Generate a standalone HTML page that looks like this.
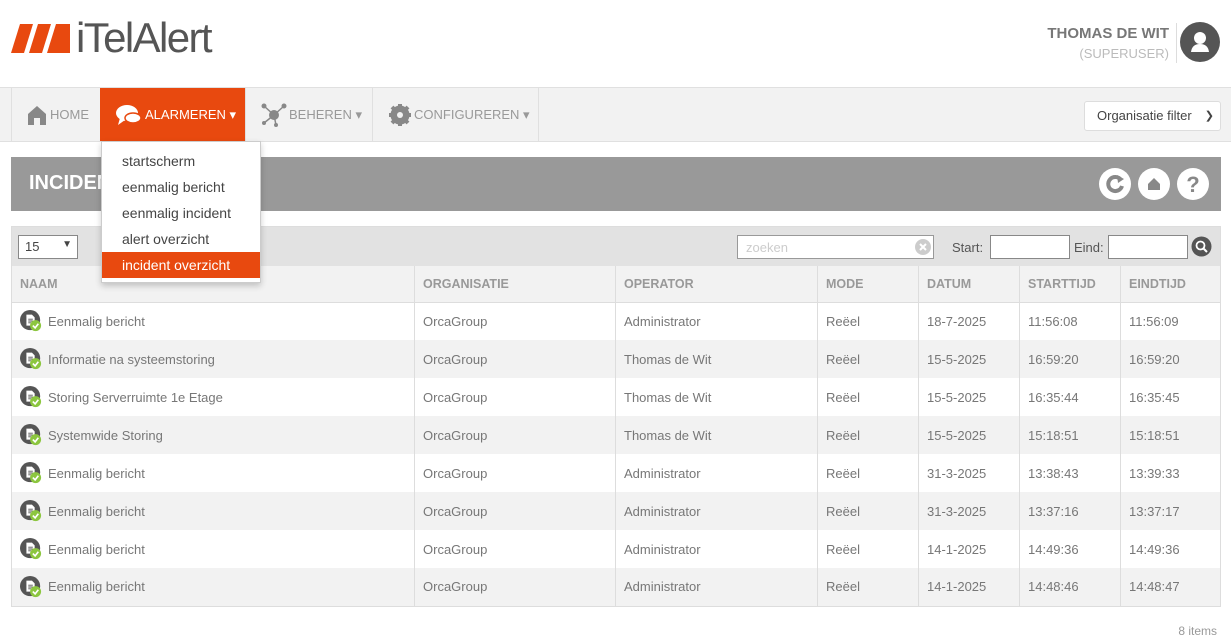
<!DOCTYPE html>
<html><head><meta charset="utf-8"><style>
*{box-sizing:border-box;margin:0;padding:0}
body{width:1231px;height:641px;background:#fff;font-family:"Liberation Sans",sans-serif;color:#666;position:relative;overflow:hidden;font-size:13px}
.abs{position:absolute}
.nav{left:0;top:87px;width:1231px;height:55px;background:#f2f2f2;border-top:1px solid #e0e0e0;border-bottom:1px solid #e0e0e0}
.ni{position:absolute;top:0;height:53px;border-left:1px solid #e0e0e0;display:flex;align-items:center;font-size:13px;color:#999}
table{border-collapse:collapse;position:absolute;left:11px;top:266px;width:1210px}
td,th{height:38px;border-right:1px solid #ddd;padding-left:8px;text-align:left;font-size:13px;color:#777;font-weight:normal}
th{height:36px;font-weight:bold;color:#999;background:#f2f2f2;border-bottom:1px solid #ddd;font-size:12.5px}
tr:nth-child(odd) td{background:#f2f2f2}
table{border-left:1px solid #ddd;border-bottom:1px solid #ddd}
.nm{display:flex;align-items:center}
.ic{display:inline-block;margin-right:6px;width:22px;height:22px}
.dd div{height:26px;line-height:26px;padding-left:20px;font-size:14px;color:#444}
</style></head><body>
<svg class="abs" style="left:11px;top:24px" width="62" height="30"><polygon points="9,0 22,0 13,29 0,29" fill="#e8490f"/><polygon points="27,0 40,0 31,29 18,29" fill="#e8490f"/><polygon points="45,0 59,0 59,29 36,29" fill="#e8490f"/></svg>
<div class="abs" style="left:76px;top:14px;font-size:42px;color:#555;letter-spacing:-1.6px">iTelAlert</div>
<div class="abs" style="right:62px;top:25px;font-size:15px;font-weight:bold;color:#777;text-align:right">THOMAS DE WIT</div>
<div class="abs" style="right:62px;top:46px;font-size:13px;color:#bbb;text-align:right">(SUPERUSER)</div>
<div class="abs" style="left:1176px;top:23px;width:1px;height:40px;background:#ddd"></div>
<svg class="abs" style="left:1180px;top:22px" width="40" height="40"><circle cx="20" cy="20" r="20" fill="#555"/><circle cx="20" cy="16" r="6" fill="#fff"/><path d="M11 30 Q12 22 20 22 Q28 22 29 30Z" fill="#fff"/></svg>
<div class="abs nav"></div>
<div class="ni" style="left:11px;top:88px;width:90px;padding-left:15px"><svg width="20" height="20"><path d="M10 1 L19 9 V20 H13 V13 H7 V20 H1 V9Z" fill="#888"/></svg><span style="margin-left:3px">HOME</span></div>
<div class="ni" style="left:100px;top:88px;width:145px;background:#e8490f;color:#fff;padding-left:15px;border:none"><svg width="28" height="22"><ellipse cx="12" cy="9" rx="11" ry="8" fill="#fff"/><path d="M5 14 L3 21 L10 16Z" fill="#fff"/><ellipse cx="18" cy="14" rx="8" ry="5" fill="#fff" stroke="#e8490f" stroke-width="1.5"/></svg><span style="margin-left:2px">ALARMEREN ▾</span></div>
<div class="ni" style="left:245px;top:88px;width:127px;padding-left:15px"><svg width="26" height="24"><g fill="#888"><circle cx="13" cy="12" r="5"/><circle cx="3" cy="3" r="2.5"/><circle cx="23" cy="3" r="2.5"/><circle cx="3" cy="20" r="2"/><circle cx="15" cy="22" r="2"/></g><path d="M3 3L13 12L23 3M3 20L13 12L15 22" stroke="#888" stroke-width="1.5" fill="none"/></svg><span style="margin-left:2px">BEHEREN ▾</span></div>
<div class="ni" style="left:372px;top:88px;width:167px;padding-left:16px;border-right:1px solid #e0e0e0"><svg width="22" height="22"><circle cx="11" cy="11" r="7" fill="none" stroke="#888" stroke-width="5"/><g stroke="#888" stroke-width="4"><path d="M11 0V22M0 11H22M3 3L19 19M19 3L3 19"/></g><circle cx="11" cy="11" r="3" fill="#f2f2f2"/></svg><span style="margin-left:3px">CONFIGUREREN ▾</span></div>
<div class="abs" style="left:1084px;top:101px;width:137px;height:30px;background:#fff;border:1px solid #ddd;border-radius:3px;font-size:13px;color:#444;line-height:28px;padding-left:12px">Organisatie filter <span style="position:absolute;right:6px;font-size:11px">❯</span></div>
<div class="abs" style="left:11px;top:157px;width:1210px;height:54px;background:#999"></div>
<div class="abs" style="left:29px;top:172px;font-size:20px;font-weight:bold;color:#fff">INCIDENTEN</div>
<svg class="abs" style="left:1098px;top:168px" width="116" height="34"><g fill="#fff"><circle cx="17" cy="16" r="16"/><circle cx="56" cy="16" r="16"/><circle cx="95" cy="16" r="16"/></g><path d="M23 12 A7 7 0 1 0 24 18" stroke="#888" stroke-width="4" fill="none"/><path d="M19 7L26 11L20 15Z" fill="#888"/><path d="M50 16L56 10L62 16V22H50Z" fill="#888"/><text x="95" y="24" text-anchor="middle" font-size="22" font-weight="bold" fill="#888" font-family="Liberation Sans">?</text></svg>
<div class="abs" style="left:11px;top:226px;width:1210px;height:41px;background:#e2e2e2;border:1px solid #ddd"></div>
<div class="abs" style="left:18px;top:235px;width:60px;height:24px;background:#fff;border:1px solid #888;font-size:13px;color:#444;padding:3px 6px">15<span style="position:absolute;right:5px;font-size:10px">▼</span></div>
<div class="abs" style="left:737px;top:235px;width:197px;height:24px;background:#fff;border:1px solid #999;color:#ccc;padding:4px 8px">zoeken<svg style="position:absolute;right:1px;top:2px" width="18" height="18"><circle cx="9" cy="9" r="8" fill="#ccc"/><path d="M6 6L12 12M12 6L6 12" stroke="#fff" stroke-width="2"/></svg></div>
<div class="abs" style="left:952px;top:240px;color:#555">Start:</div>
<div class="abs" style="left:990px;top:235px;width:80px;height:24px;background:#fff;border:1px solid #888"></div>
<div class="abs" style="left:1074px;top:240px;color:#555">Eind:</div>
<div class="abs" style="left:1108px;top:235px;width:80px;height:24px;background:#fff;border:1px solid #888"></div>
<svg class="abs" style="left:1191px;top:236px" width="21" height="21"><circle cx="10.5" cy="10.5" r="10" fill="#555"/><circle cx="9.5" cy="9.5" r="4" stroke="#fff" stroke-width="1.8" fill="none"/><path d="M12.5 12.5L16 16" stroke="#fff" stroke-width="2"/></svg>
<table>
<tr><th style="width:403px">NAAM</th><th style="width:201px">ORGANISATIE</th><th style="width:202px">OPERATOR</th><th style="width:101px">MODE</th><th style="width:101px">DATUM</th><th style="width:101px">STARTTIJD</th><th>EINDTIJD</th></tr>
<tr><td><div class="nm"><svg class="ic" viewBox="0 0 24 24"><circle cx="11" cy="11" r="11" fill="#555"/><path d="M7 5H13L16 8V17H7Z" fill="#fff"/><path d="M9 10H14M9 12H14M9 14H12" stroke="#555"/><circle cx="17" cy="17" r="6" fill="#8cc63f"/><path d="M14 17L16.5 19.5L20 15" stroke="#fff" stroke-width="1.8" fill="none"/></svg>Eenmalig bericht</div></td><td>OrcaGroup</td><td>Administrator</td><td>Reëel</td><td>18-7-2025</td><td>11:56:08</td><td>11:56:09</td></tr>
<tr><td><div class="nm"><svg class="ic" viewBox="0 0 24 24"><circle cx="11" cy="11" r="11" fill="#555"/><path d="M7 5H13L16 8V17H7Z" fill="#fff"/><path d="M9 10H14M9 12H14M9 14H12" stroke="#555"/><circle cx="17" cy="17" r="6" fill="#8cc63f"/><path d="M14 17L16.5 19.5L20 15" stroke="#fff" stroke-width="1.8" fill="none"/></svg>Informatie na systeemstoring</div></td><td>OrcaGroup</td><td>Thomas de Wit</td><td>Reëel</td><td>15-5-2025</td><td>16:59:20</td><td>16:59:20</td></tr>
<tr><td><div class="nm"><svg class="ic" viewBox="0 0 24 24"><circle cx="11" cy="11" r="11" fill="#555"/><path d="M7 5H13L16 8V17H7Z" fill="#fff"/><path d="M9 10H14M9 12H14M9 14H12" stroke="#555"/><circle cx="17" cy="17" r="6" fill="#8cc63f"/><path d="M14 17L16.5 19.5L20 15" stroke="#fff" stroke-width="1.8" fill="none"/></svg>Storing Serverruimte 1e Etage</div></td><td>OrcaGroup</td><td>Thomas de Wit</td><td>Reëel</td><td>15-5-2025</td><td>16:35:44</td><td>16:35:45</td></tr>
<tr><td><div class="nm"><svg class="ic" viewBox="0 0 24 24"><circle cx="11" cy="11" r="11" fill="#555"/><path d="M7 5H13L16 8V17H7Z" fill="#fff"/><path d="M9 10H14M9 12H14M9 14H12" stroke="#555"/><circle cx="17" cy="17" r="6" fill="#8cc63f"/><path d="M14 17L16.5 19.5L20 15" stroke="#fff" stroke-width="1.8" fill="none"/></svg>Systemwide Storing</div></td><td>OrcaGroup</td><td>Thomas de Wit</td><td>Reëel</td><td>15-5-2025</td><td>15:18:51</td><td>15:18:51</td></tr>
<tr><td><div class="nm"><svg class="ic" viewBox="0 0 24 24"><circle cx="11" cy="11" r="11" fill="#555"/><path d="M7 5H13L16 8V17H7Z" fill="#fff"/><path d="M9 10H14M9 12H14M9 14H12" stroke="#555"/><circle cx="17" cy="17" r="6" fill="#8cc63f"/><path d="M14 17L16.5 19.5L20 15" stroke="#fff" stroke-width="1.8" fill="none"/></svg>Eenmalig bericht</div></td><td>OrcaGroup</td><td>Administrator</td><td>Reëel</td><td>31-3-2025</td><td>13:38:43</td><td>13:39:33</td></tr>
<tr><td><div class="nm"><svg class="ic" viewBox="0 0 24 24"><circle cx="11" cy="11" r="11" fill="#555"/><path d="M7 5H13L16 8V17H7Z" fill="#fff"/><path d="M9 10H14M9 12H14M9 14H12" stroke="#555"/><circle cx="17" cy="17" r="6" fill="#8cc63f"/><path d="M14 17L16.5 19.5L20 15" stroke="#fff" stroke-width="1.8" fill="none"/></svg>Eenmalig bericht</div></td><td>OrcaGroup</td><td>Administrator</td><td>Reëel</td><td>31-3-2025</td><td>13:37:16</td><td>13:37:17</td></tr>
<tr><td><div class="nm"><svg class="ic" viewBox="0 0 24 24"><circle cx="11" cy="11" r="11" fill="#555"/><path d="M7 5H13L16 8V17H7Z" fill="#fff"/><path d="M9 10H14M9 12H14M9 14H12" stroke="#555"/><circle cx="17" cy="17" r="6" fill="#8cc63f"/><path d="M14 17L16.5 19.5L20 15" stroke="#fff" stroke-width="1.8" fill="none"/></svg>Eenmalig bericht</div></td><td>OrcaGroup</td><td>Administrator</td><td>Reëel</td><td>14-1-2025</td><td>14:49:36</td><td>14:49:36</td></tr>
<tr><td><div class="nm"><svg class="ic" viewBox="0 0 24 24"><circle cx="11" cy="11" r="11" fill="#555"/><path d="M7 5H13L16 8V17H7Z" fill="#fff"/><path d="M9 10H14M9 12H14M9 14H12" stroke="#555"/><circle cx="17" cy="17" r="6" fill="#8cc63f"/><path d="M14 17L16.5 19.5L20 15" stroke="#fff" stroke-width="1.8" fill="none"/></svg>Eenmalig bericht</div></td><td>OrcaGroup</td><td>Administrator</td><td>Reëel</td><td>14-1-2025</td><td>14:48:46</td><td>14:48:47</td></tr>
</table>
<div class="abs" style="right:14px;top:624px;font-size:12px;color:#999">8 items</div>
<div class="abs dd" style="left:101px;top:141px;width:160px;height:142px;background:#fff;border:1px solid #ccc;box-shadow:0 3px 6px rgba(0,0,0,.2);padding-top:6px">
<div>startscherm</div><div>eenmalig bericht</div><div>eenmalig incident</div><div>alert overzicht</div><div style="background:#e8490f;color:#fff">incident overzicht</div></div>
</body></html>
